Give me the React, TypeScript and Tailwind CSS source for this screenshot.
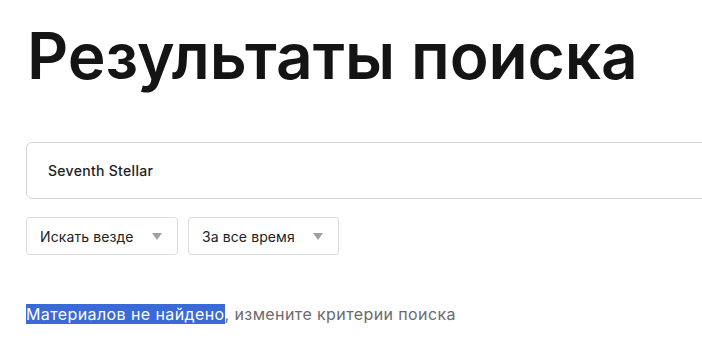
function Caret() {
  return (
    <svg width="10" height="7" viewBox="0 0 10 7" className="shrink-0">
      <path d="M0 0 H10 L5 7 Z" fill="#a0a0a0" />
    </svg>
  )
}

function Select({ label, width }: { label: string; width: string }) {
  return (
    <div className={`${width} h-[38px] flex items-center justify-between pl-[13px] pr-[15px] border border-[#dcdcdc] rounded-[3px] bg-white`}>
      <span className="text-[14px] tracking-[0.1px] text-[#222]">{label}</span>
      <Caret />
    </div>
  )
}

export default function App() {
  return (
    <div className="w-[702px] h-[340px] overflow-hidden bg-white font-['Inter',sans-serif]">
      <div className="pl-[26px] pt-[20px]">
        <h1 className="text-[64px] leading-[72px] font-semibold tracking-[-0.1px] text-[#141414] pl-[1px]">
          Результаты поиска
        </h1>
        <div className="mt-[50px] w-[720px] h-[57px] flex items-center pl-[21px] border border-[#d4d4d4] rounded-[6px]">
          <span className="text-[14px] font-medium tracking-[0.3px] text-[#222]">Seventh Stellar</span>
        </div>
        <div className="mt-[18px] flex gap-[10px]">
          <Select label="Искать везде" width="w-[152px]" />
          <Select label="За все время" width="w-[151px]" />
        </div>
        <p className="mt-[48px] text-[16px] leading-[22px] tracking-[0.4px] text-[#6b6b6b]">
          <span className="bg-[#3a6ad6] text-white">Материалов не найдено</span>, измените критерии поиска
        </p>
      </div>
    </div>
  )
}
